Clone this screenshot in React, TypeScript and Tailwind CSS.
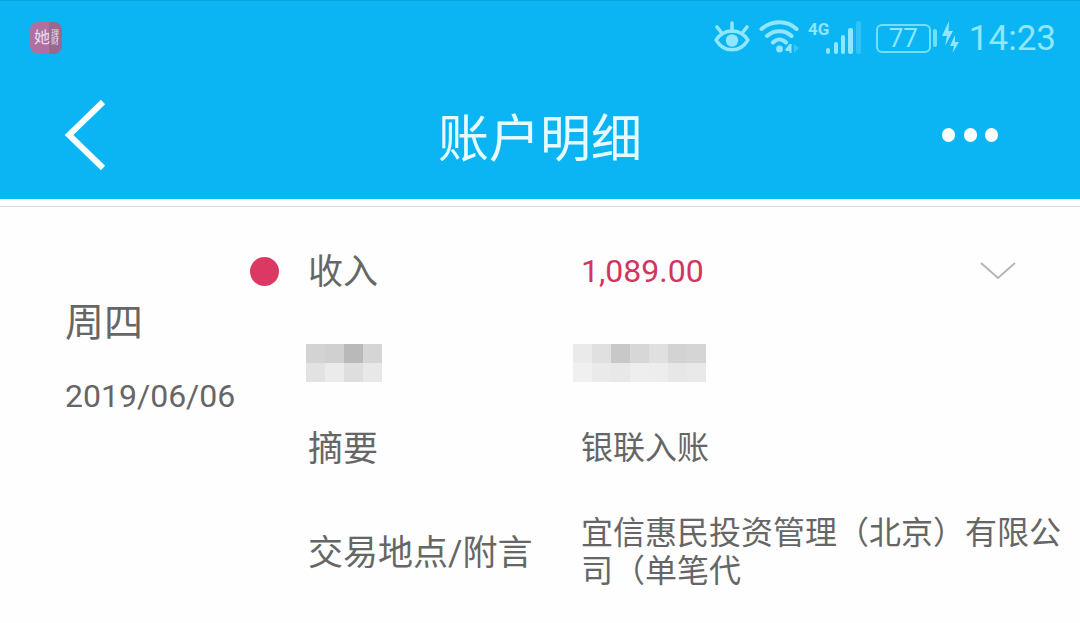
import type { ReactNode } from 'react';

const labelMosaic = [
	['bg-[#d3d3d3]', 'bg-[#d0d0d0]', 'bg-[#b9b9b9]', 'bg-[#d5d5d5]'],
	['bg-[#e2e2e2]', 'bg-[#ebebeb]', 'bg-[#dedede]', 'bg-[#e8e8e8]']
];

const valueMosaic = [
	[
		'bg-[#eaeaea]',
		'bg-[#e0e0e0]',
		'bg-[#c8c8c8]',
		'bg-[#d7d7d7]',
		'bg-[#e0e0e0]',
		'bg-[#d3d3d3]',
		'bg-[#d5d5d5]'
	],
	[
		'bg-[#f0f0f0]',
		'bg-[#eaeaea]',
		'bg-[#e8e8e8]',
		'bg-[#eeeeee]',
		'bg-[#ededed]',
		'bg-[#e7e7e7]',
		'bg-[#e9e9e9]'
	]
];

function Mosaic({ rows }: { rows: string[][] }) {
	return (
		<div className="flex flex-col" aria-hidden="true">
			{rows.map((row, i) => (
				<div key={i} className="flex">
					{row.map((color, j) => (
						<span key={j} className={`h-[19px] w-[19px] ${color}`} />
					))}
				</div>
			))}
		</div>
	);
}

function StatusBar() {
	return (
		<div className="flex h-[74px] items-center pr-6 pl-[30px] text-[#8fe6ff]">
			<div className="flex h-8 w-8 items-center overflow-hidden rounded-lg bg-linear-to-r from-[#b0709f] from-60% to-[#98688f] to-60% text-[#e4e0f4]">
				<span className="w-5 pl-1 text-[16px] leading-none">她</span>
				<span className="flex w-3 flex-col pl-px text-[8px] leading-[8px]">
					<span>理</span>
					<span>财</span>
				</span>
			</div>

			<div className="ml-auto flex items-center">
				<svg className="h-9 w-9" viewBox="0 0 36 36" fill="none">
					<path
						d="M2 20C10 8 26 8 34 20C26 33 10 33 2 20Z"
						stroke="currentColor"
						strokeWidth="3.4"
						strokeLinejoin="round"
					/>
					<circle cx="18" cy="20.500" r="6.200" fill="currentColor" />
					<path
						d="M18 3V11M3 7L7 12M33 7L29 12"
						stroke="currentColor"
						strokeWidth="3.600"
						strokeLinecap="round"
					/>
				</svg>
				<svg
					className="ml-2 h-9 w-[44px]"
					viewBox="0 0 44 36"
					fill="none"
					stroke="currentColor"
					strokeWidth="4"
					strokeLinecap="round"
				>
					<path d="M3.500 9C14 0 29 0 38.500 9M9 16C16 9.500 27 9.500 33.500 16M15 22.500C19 18.500 24 18.500 28 22.500" />
					<circle cx="21.500" cy="29" r="3.400" fill="currentColor" stroke="none" />
					<path
						d="M33.500 24V33H31.500V31H27.500V29L31.500 24Z"
						fill="currentColor"
						stroke="none"
					/>
					<path
						d="M36 24L41 28L36 33Z"
						fill="currentColor"
						fillOpacity="0.350"
						stroke="none"
					/>
				</svg>
				<svg className="ml-[6px] h-9 w-[56px]" viewBox="0 0 56 36">
					<text
						x="0"
						y="15"
						fill="currentColor"
						fontFamily="Roboto, sans-serif"
						fontSize="17"
						fontWeight="700"
					>
						4G
					</text>
					<g fill="currentColor">
						<rect x="18" y="28" width="4" height="6" rx="2" />
						<rect x="26" y="22" width="4" height="12" rx="2" />
						<rect x="33" y="15" width="4" height="19" rx="2" />
						<rect x="40" y="8" width="5" height="26" rx="2" />
						<rect x="48" y="1" width="5" height="33" rx="2" fillOpacity="0.300" />
					</g>
				</svg>
				<div className="ml-3 flex h-[29px] w-[55px] items-center justify-center rounded-md border-2 border-[#73ddfc] text-[26px] leading-none">
					77
				</div>
				<span className="ml-[2px] h-[18px] w-[4px] rounded-xs bg-[#73ddfc]" />
				<svg
					className="ml-1 h-9 w-5"
					viewBox="0 0 20 36"
					fill="currentColor"
				>
					<path d="M8 1L1 16H6L4 26L12 11H7.500Z" />
					<path d="M14 15L9 26H13L11.500 33L18 22H14Z" />
				</svg>
				<time className="ml-2 text-[35px] leading-none">14:23</time>
			</div>
		</div>
	);
}

function DetailRow({
	marker,
	label,
	children
}: {
	marker?: ReactNode;
	label: ReactNode;
	children: ReactNode;
}) {
	return (
		<div className="flex items-center">
			<div className="w-[58px] shrink-0">{marker}</div>
			<dt className="w-[273px] shrink-0 pt-1 text-[35px] leading-10">
				{label}
			</dt>
			<dd className="flex min-w-0 flex-1 items-center text-[32px] leading-[38px]">
				{children}
			</dd>
		</div>
	);
}

function App() {
	return (
		<div className="min-h-screen bg-[#fefefe] font-[Roboto,'Noto_Sans_CJK_SC',sans-serif] text-[#666666]">
			<header className="border-t border-[#0aa5df] bg-[#0bb5f3]">
				<StatusBar />
				<nav className="grid h-[124px] grid-cols-[1fr_auto_1fr] items-center pr-20 pl-16 text-white">
					<button type="button" aria-label="返回" className="w-14 pb-1">
						<svg
							className="h-[72px] w-[42px]"
							viewBox="0 0 42 72"
							fill="none"
							stroke="currentColor"
							strokeWidth="6"
						>
							<path d="M39 3L5 36L39 69" />
						</svg>
					</button>
					<h1 className="pt-1 pl-4 text-[51px] leading-none font-normal text-[#e6fbff]">
						账户明细
					</h1>
					<button
						type="button"
						aria-label="更多"
						className="mr-0.5 flex w-14 items-center justify-between justify-self-end pb-1"
					>
						<span className="h-[14px] w-[13px] rounded-full bg-white" />
						<span className="h-[14px] w-[13px] rounded-full bg-white" />
						<span className="h-[14px] w-[13px] rounded-full bg-white" />
					</button>
				</nav>
			</header>

			<main className="mt-[7px] flex border-t border-[#d9d9d9] pt-[42px] pr-4 pl-[65px]">
				<div className="w-[185px] shrink-0 pt-[50px]">
					<div className="text-[39px] leading-12">周四</div>
					<div className="mt-[29px] text-[32px] leading-10">2019/06/06</div>
				</div>

				<dl className="min-w-0 flex-1">
					<DetailRow
						marker={
							<span className="block h-[29px] w-[29px] rounded-full bg-[#db3964]" />
						}
						label="收入"
					>
						<span className="text-[#d2355f]">1,089.00</span>
						<button
							type="button"
							aria-label="展开"
							className="mr-12 ml-auto text-[#b5b5b5]"
						>
							<svg
								className="h-5 w-9"
								viewBox="0 0 36 20"
								fill="none"
								stroke="currentColor"
								strokeWidth="2"
							>
								<path d="M1 2L18 17L35 2" />
							</svg>
						</button>
					</DetailRow>
					<div className="mt-[51px] flex pl-14">
						<dt className="w-[267px] shrink-0">
							<Mosaic rows={labelMosaic} />
						</dt>
						<dd>
							<Mosaic rows={valueMosaic} />
						</dd>
					</div>
					<div className="mt-11">
						<DetailRow label="摘要">银联入账</DetailRow>
					</div>
					<div className="mt-11">
						<DetailRow label="交易地点/附言">
							宜信惠民投资管理（北京）有限公司（单笔代
						</DetailRow>
					</div>
				</dl>
			</main>
		</div>
	);
}

export default App;
